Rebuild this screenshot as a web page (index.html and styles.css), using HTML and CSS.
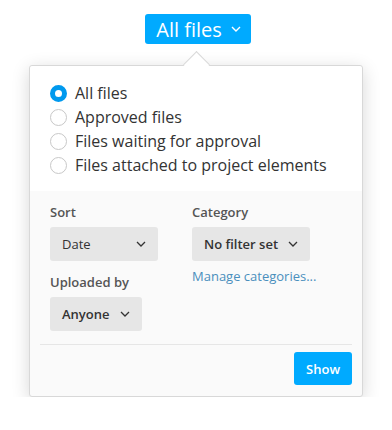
FILE: index.html
```html
<!DOCTYPE html>
<html>
<head>
    <title>Files filter</title>
    <meta name="viewport" content="width=device-width, initial-scale=1">
    <link rel="stylesheet" href="styles.css">
</head>
<body>
    <div class="page">
        <button class="trigger">All files
            <svg class="chev" width="10" height="6" viewBox="0 0 10 6"><path d="M1 1l4 4 4-4" fill="none" stroke="#fff" stroke-width="1.4"/></svg>
        </button>
        <div class="popover">
            <div class="options">
                <label class="radio checked"><span class="dot"></span>All files</label>
                <label class="radio"><span class="dot"></span>Approved files</label>
                <label class="radio"><span class="dot"></span>Files waiting for approval</label>
                <label class="radio"><span class="dot"></span>Files attached to project elements</label>
            </div>
            <div class="filters">
                <div class="grid">
                    <div class="col">
                        <div class="label">Sort</div>
                        <div class="select wide">Date
                            <svg class="chev" width="10" height="6" viewBox="0 0 10 6"><path d="M1 1l4 4 4-4" fill="none" stroke="#333" stroke-width="1.3"/></svg>
                        </div>
                        <div class="label second">Uploaded by</div>
                        <div class="select bold">Anyone
                            <svg class="chev" width="10" height="6" viewBox="0 0 10 6"><path d="M1 1l4 4 4-4" fill="none" stroke="#333" stroke-width="1.3"/></svg>
                        </div>
                    </div>
                    <div class="col">
                        <div class="label">Category</div>
                        <div class="select bold">No filter set
                            <svg class="chev" width="10" height="6" viewBox="0 0 10 6"><path d="M1 1l4 4 4-4" fill="none" stroke="#333" stroke-width="1.3"/></svg>
                        </div>
                        <a class="manage" href="#">Manage categories...</a>
                    </div>
                </div>
                <div class="footer">
                    <button class="show">Show</button>
                </div>
            </div>
        </div>
    </div>
</body>
</html>
```

FILE: styles.css
```css
body {
    font-family: 'Open Sans', sans-serif;
    margin: 0;
    background-color: #fff;
    color: #333;
}
.page {
    display: flex;
    flex-direction: column;
    align-items: center;
    padding-top: 14px;
}
.trigger {
    display: flex;
    align-items: center;
    gap: 9px;
    height: 30px;
    padding: 0 10px 0 11px;
    margin-left: 4px;
    border: none;
    border-radius: 3px;
    background-color: #00aaff;
    color: #fff;
    font-family: inherit;
    font-size: 20px;
}
.popover {
    position: relative;
    margin-top: 21px;
    width: 332px;
    border: 1px solid #d8d8d8;
    border-radius: 3px;
    background-color: #fafafa;
    box-shadow: 0 4px 18px rgba(0,0,0,0.16);
}
.popover::before {
    content: '';
    position: absolute;
    top: -11px;
    left: 157px;
    width: 18px;
    height: 18px;
    background-color: #fff;
    border-top: 1px solid #d8d8d8;
    border-left: 1px solid #d8d8d8;
    transform: rotate(45deg);
    transform-origin: center;
}
.options {
    position: relative;
    display: flex;
    flex-direction: column;
    padding: 15px 20px 14px;
    background-color: #fff;
    border-radius: 3px 3px 0 0;
}
.radio {
    display: flex;
    align-items: center;
    gap: 8px;
    height: 24px;
    font-size: 16px;
    color: #333;
}
.dot {
    box-sizing: border-box;
    width: 17px;
    height: 17px;
    border: 1px solid #c8c8c8;
    border-radius: 50%;
    background-color: #fff;
}
.checked .dot {
    border: 5px solid #0099ee;
}
.filters {
    padding: 12px 10px 11px;
}
.grid {
    display: grid;
    grid-template-columns: 142px 1fr;
    padding: 0 10px 13px;
}
.label {
    font-size: 13px;
    font-weight: 600;
    color: #555;
    margin-bottom: 6px;
}
.label.second {
    margin-top: 12px;
}
.select {
    display: flex;
    align-items: center;
    justify-content: space-between;
    box-sizing: border-box;
    height: 34px;
    padding: 0 12px;
    gap: 10px;
    align-self: flex-start;
    width: max-content;
    background-color: #e6e6e6;
    border-radius: 3px;
    font-size: 13px;
    color: #333;
}
.select.wide {
    width: 108px;
}
.select.bold {
    font-weight: 600;
}
.manage {
    display: block;
    margin-top: 6px;
    font-size: 13px;
    color: #4a8fbd;
    text-decoration: none;
}
.footer {
    display: flex;
    justify-content: flex-end;
    border-top: 1px solid #e6e6e6;
    padding-top: 7px;
}
.show {
    height: 33px;
    padding: 0 12px;
    border: none;
    border-radius: 3px;
    background-color: #00aaff;
    color: #fff;
    font-family: inherit;
    font-size: 13px;
    font-weight: 600;
}
```
